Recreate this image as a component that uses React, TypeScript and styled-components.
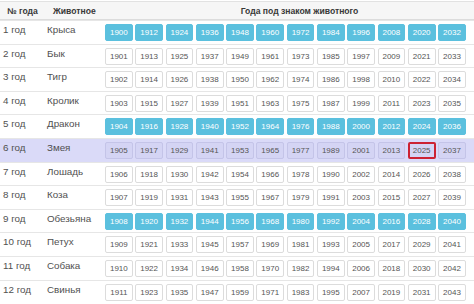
import React from "react";
import styled, { createGlobalStyle, css } from "styled-components";

const Global = createGlobalStyle`
  html, body { margin: 0; padding: 0; background: #fff; }
  body { font-family: "Liberation Sans", Arial, sans-serif; overflow: hidden; }
`;

const Table = styled.div`
  width: 474px;
  display: flex;
  flex-direction: column;
`;

const HeaderRow = styled.div`
  display: flex;
  align-items: center;
  height: 19px;
  margin-top: 1px;
  border-top: 1px solid #e2e2e2;
  border-bottom: 1px solid #dcdcdc;
  background: #f6f6f6;
  box-sizing: border-box;
  font-size: 8.6px;
  font-weight: bold;
  color: #383838;
`;

const HeadCell = styled.div<{ $w?: number; $pl?: number; $center?: boolean }>`
  ${(p) => (p.$w ? `width: ${p.$w}px; flex: none;` : "flex: 1;")}
  padding-left: ${(p) => p.$pl ?? 0}px;
  box-sizing: border-box;
  text-align: ${(p) => (p.$center ? "center" : "left")};
  white-space: nowrap;
`;

const Row = styled.div<{ $active?: boolean }>`
  display: flex;
  align-items: flex-start;
  height: 23.6px;
  box-sizing: border-box;
  border-top: 1px solid #e6e6e6;
  background: ${(p) => (p.$active ? "#dadaf8" : "#fff")};
`;

const Label = styled.div<{ $w: number; $pl: number }>`
  width: ${(p) => p.$w}px;
  flex: none;
  box-sizing: border-box;
  padding-left: ${(p) => p.$pl}px;
  padding-top: 3px;
  font-size: 9.8px;
  line-height: 12px;
  color: #505050;
  white-space: nowrap;
`;

const Years = styled.div`
  display: flex;
  gap: 2.6px;
  padding-top: 3px;
`;

const YearBox = styled.div<{ $kind: "plain" | "blue" | "active" | "current" }>`
  width: 27.7px;
  height: 17px;
  box-sizing: border-box;
  display: flex;
  align-items: center;
  justify-content: center;
  font-size: 8px;
  border-radius: 2px;
  border: 1px solid #dcdcdc;
  background: #fff;
  color: #555;
  ${(p) =>
    p.$kind === "blue" &&
    css`
      background: #5bc0de;
      border-color: #5bc0de;
      color: #fff;
    `}
  ${(p) =>
    p.$kind === "active" &&
    css`
      background: #d4d4f4;
      border-color: #c4c4e8;
      color: #555;
    `}
  ${(p) =>
    p.$kind === "current" &&
    css`
      background: #d4d4f4;
      border: 2px solid #cc2233;
      color: #555;
    `}
`;

const animals = [
  "Крыса",
  "Бык",
  "Тигр",
  "Кролик",
  "Дракон",
  "Змея",
  "Лошадь",
  "Коза",
  "Обезьяна",
  "Петух",
  "Собака",
  "Свинья",
];

const blueRows = new Set([0, 4, 8]);
const activeRow = 5;

export default function App() {
  return (
    <>
      <Global />
      <Table>
        <HeaderRow>
          <HeadCell $w={47} $pl={7}>№ года</HeadCell>
          <HeadCell $w={58} $pl={6}>Животное</HeadCell>
          <HeadCell $center $pl={20}>Года под знаком животного</HeadCell>
        </HeaderRow>
        {animals.map((a, i) => (
          <Row key={a} $active={i === activeRow}>
            <Label $w={47} $pl={3}>{i + 1} год</Label>
            <Label $w={58} $pl={0}>{a}</Label>
            <Years>
              {Array.from({ length: 12 }, (_, j) => {
                const y = 1900 + i + j * 12;
                let kind: "plain" | "blue" | "active" | "current" = "plain";
                if (blueRows.has(i)) kind = "blue";
                else if (i === activeRow) kind = y === 2025 ? "current" : "active";
                return (
                  <YearBox key={y} $kind={kind}>
                    {y}
                  </YearBox>
                );
              })}
            </Years>
          </Row>
        ))}
      </Table>
    </>
  );
}
